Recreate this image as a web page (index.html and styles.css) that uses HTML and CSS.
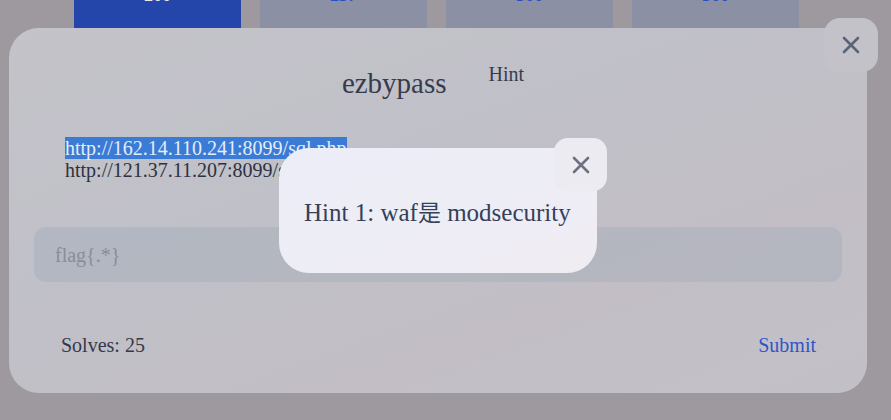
FILE: index.html
```html
<!DOCTYPE html>
<html>
<head>
<meta charset="utf-8">
<link rel="stylesheet" href="styles.css">
</head>
<body>
<div class="tiles">
  <div class="tile active"><span>200</span></div>
  <div class="tile"><span>237</span></div>
  <div class="tile"><span>500</span></div>
  <div class="tile"><span>500</span></div>
</div>
<div class="modal">
  <div class="title-row">
    <h2 class="title">ezbypass</h2>
    <span class="hint-link">Hint</span>
  </div>
  <div class="urls">
    <div><span class="sel">http://162.14.110.241:8099/sql.php</span></div>
    <div>http://121.37.11.207:8099/sql.php</div>
  </div>
  <div class="input">flag{.*}</div>
  <div class="footer">
    <span class="solves">Solves: 25</span>
    <span class="submit">Submit</span>
  </div>
</div>
<button class="close close-main" aria-label="close">
  <svg width="20" height="20" viewBox="0 0 20 20"><path d="M3 3L17 17M17 3L3 17" stroke="currentColor" stroke-width="2.6" stroke-linecap="round"/></svg>
</button>
<div class="popup">
  <p class="popup-text">Hint 1: waf<span class="cjk">是</span> modsecurity</p>
</div>
<button class="close close-popup" aria-label="close">
  <svg width="20" height="20" viewBox="0 0 20 20"><path d="M3 3L17 17M17 3L3 17" stroke="currentColor" stroke-width="2.6" stroke-linecap="round"/></svg>
</button>
</body>
</html>
```
FILE: styles.css
```css
html, body {
  margin: 0;
  padding: 0;
}
body {
  width: 891px;
  height: 420px;
  overflow: hidden;
  background: #9d999f;
  font-family: "Liberation Serif", "Noto Sans CJK SC", serif;
  position: relative;
}
.tiles {
  display: flex;
  gap: 19px;
  padding-left: 74px;
}
.tile {
  width: 167px;
  height: 60px;
  background: #8b90a5;
  color: #2b4fc0;
  font-size: 18px;
  font-weight: bold;
  display: flex;
  justify-content: center;
}
.tile span {
  margin-top: -15px;
}
.tile.active {
  background: #2446aa;
  color: #e8e8f0;
}
.modal {
  position: absolute;
  left: 9px;
  top: 28px;
  width: 858px;
  height: 365px;
  box-sizing: border-box;
  border-radius: 30px;
  background: linear-gradient(160deg, #c4c3ca 0%, #c0c0c8 40%, #c3bec5 70%, #c2c0c7 100%);
  padding: 0 51px 0 25px;
  display: flex;
  flex-direction: column;
}
.title-row {
  display: flex;
  justify-content: center;
  gap: 42px;
  padding-top: 34px;
  height: 42px;
  padding-left: 16px;
}
.title {
  margin: 0;
  font-weight: normal;
  font-size: 29px;
  line-height: 42px;
  color: #363c4d;
}
.hint-link {
  font-size: 20px;
  color: #363c4d;
  line-height: 22px;
  margin-top: 1px;
}
.urls {
  margin-top: 33px;
  padding-left: 31px;
  font-size: 20px;
  line-height: 22px;
  color: #2d3242;
}
.sel {
  background: #3a7bd5;
  color: #e6ecf7;
}
.input {
  margin-top: 46px;
  width: 808px;
  height: 55px;
  box-sizing: border-box;
  border-radius: 12px;
  background: rgba(165, 172, 185, 0.45);
  color: #898d99;
  font-size: 20px;
  line-height: 56px;
  padding-left: 21px;
}
.footer {
  margin-top: 51px;
  padding-left: 27px;
  display: flex;
  justify-content: space-between;
  font-size: 20px;
  line-height: 24px;
}
.solves {
  color: #33394a;
}
.submit {
  color: #2f55c8;
}
.close {
  position: absolute;
  border: none;
  padding: 0;
  display: flex;
  align-items: center;
  justify-content: center;
}
.close-main {
  left: 824px;
  top: 18px;
  width: 54px;
  height: 54px;
  border-radius: 16px;
  background: #c3c2c9;
  color: #5a6478;
}
.popup {
  position: absolute;
  left: 279px;
  top: 148px;
  width: 318px;
  height: 125px;
  box-sizing: border-box;
  border-radius: 30px;
  background: linear-gradient(160deg, #eceef7 0%, #eeedf6 60%, #f0ecf2 100%);
  padding-left: 25px;
  display: flex;
  align-items: center;
}
.popup-text {
  margin: 0;
  font-size: 25px;
  color: #35405a;
  white-space: nowrap;
}
.cjk {
  font-family: "Noto Sans CJK SC", sans-serif;
  font-size: 23px;
}
.close-popup {
  left: 554px;
  top: 138px;
  width: 53px;
  height: 53px;
  border-radius: 14px;
  background: #edebf2;
  color: #6b7180;
}
```
